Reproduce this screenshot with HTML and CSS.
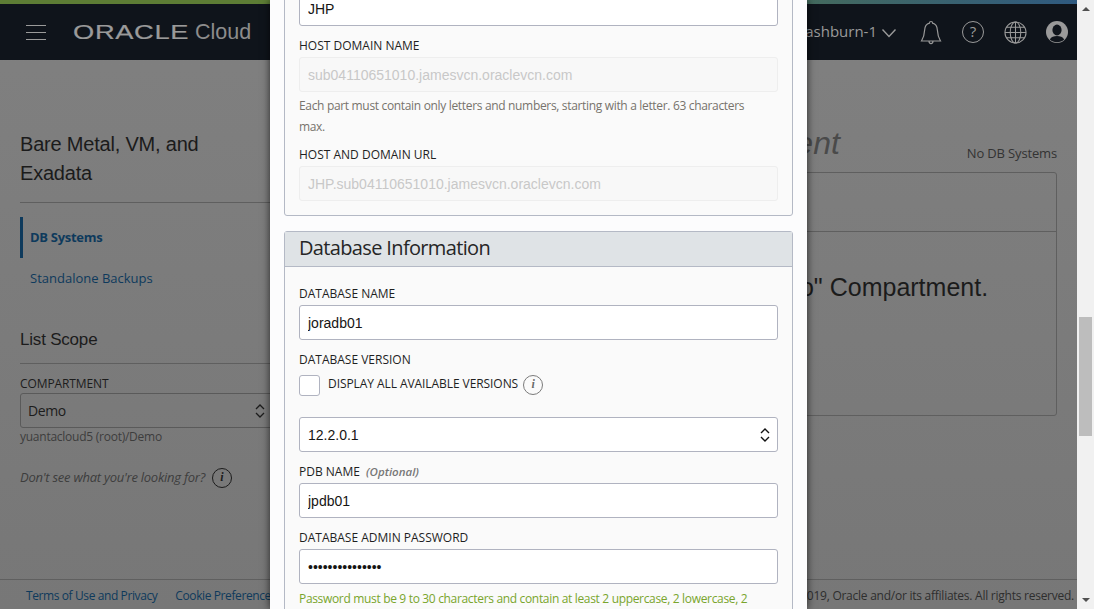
FILE: index.html
```html
<!DOCTYPE html>
<html lang="en">
<head>
    <meta charset="UTF-8">
    <title>Oracle Cloud</title>
    <link rel="stylesheet" href="styles.css">
</head>
<body>
<div class="viewport">
    <div class="strip"></div>
    <div class="topbar">
        <div class="burger"><span></span><span></span><span></span></div>
        <div class="logo"><span class="logo-word">ORACLE</span><span class="logo-cloud">Cloud</span></div>
        <div class="top-right">
            <span class="region">US East (Ashburn) us-ashburn-1</span>
            <svg class="chev" width="16" height="10" viewBox="0 0 16 10"><path d="M1.500 1.500 8 8.500l6.500-7" fill="none" stroke="#9a9a9a" stroke-width="1.400"/></svg>
            <svg class="top-icon bell" width="22" height="25" viewBox="0 0 22 25"><path d="M11 1.500c1 0 1.600.7 1.600 1.700 3.400.8 4.600 3.600 4.800 7 .2 4.800 1.300 7.800 3.100 10.800H1.500c1.800-3 2.900-6 3.100-10.800.2-3.400 1.400-6.200 4.800-7C9.400 2.200 10 1.500 11 1.500zM9 21c0 3.400 4 3.400 4 0" fill="none" stroke="#9a9a9a" stroke-width="1.200"/></svg>
            <span class="top-icon help-icon">?</span>
            <svg class="top-icon globe" width="23" height="23" viewBox="0 0 24 24"><g fill="none" stroke="#9a9a9a" stroke-width="1.100"><circle cx="12" cy="12" r="11"/><ellipse cx="12" cy="12" rx="5.500" ry="11"/><path d="M12 1v22M1 12h22M2.600 6.500h18.800M2.600 17.500h18.800"/></g></svg>
            <svg class="top-icon" width="22" height="22" viewBox="0 0 22 22"><circle cx="11" cy="11" r="11" fill="#9a9a9a"/><ellipse cx="11" cy="9" rx="4.600" ry="5.400" fill="#10151c"/><path d="M3.800 18.500c1.500-3 4-3.500 7.200-3.500s5.700.5 7.200 3.500c-2 1.900-4.500 2.700-7.200 2.700s-5.200-.8-7.200-2.700z" fill="#10151c"/></svg>
        </div>
    </div>

    <div class="main">
        <div class="side">
            <h2 class="side-title">Bare Metal, VM, and Exadata</h2>
            <ul class="side-nav">
                <li class="on">DB Systems</li>
                <li>Standalone Backups</li>
            </ul>
            <h3 class="scope-title">List Scope</h3>
            <div class="scope-label">COMPARTMENT</div>
            <div class="scope-select">
                <span>Demo</span>
                <svg width="10" height="16" viewBox="0 0 10 16"><path d="M1 6l4-4 4 4M1 10l4 4 4-4" fill="none" stroke="#1c1c1c" stroke-width="1.300"/></svg>
            </div>
            <div class="scope-path">yuantacloud5 (root)/Demo</div>
            <div class="scope-hint">Don't see what you're looking for? <span class="info dark">i</span></div>
        </div>
        <div class="content">
            <div class="content-head">
                <h1>DB Systems in Demo Compartment</h1>
                <span class="count">No DB Systems</span>
            </div>
            <div class="result-box">
                <div class="result-top"></div>
                <div class="result-msg">No DB Systems Found in the "Demo" Compartment.</div>
            </div>
        </div>
    </div>

    <div class="footer">
        <a>Terms of Use and Privacy</a>
        <a>Cookie Preferences</a>
        <span class="copy">Copyright © 2019, Oracle and/or its affiliates. All rights reserved.</span>
    </div>

    <!-- dialog on top of the dimmed page -->
    <div class="dialog">
        <div class="dialog-inner">
            <div class="card">
                <div class="card-body top">
                    <input class="text" type="text" value="JHP">
                    <label class="lbl">HOST DOMAIN NAME</label>
                    <input class="text" type="text" disabled value="sub04110651010.jamesvcn.oraclevcn.com">
                    <p class="help">Each part must contain only letters and numbers, starting with a letter. 63 characters max.</p>
                    <label class="lbl">HOST AND DOMAIN URL</label>
                    <input class="text" type="text" disabled value="JHP.sub04110651010.jamesvcn.oraclevcn.com">
                </div>
            </div>
            <div class="card">
                <div class="card-head">Database Information</div>
                <div class="card-body">
                    <label class="lbl">DATABASE NAME</label>
                    <input class="text" type="text" value="joradb01">
                    <label class="lbl">DATABASE VERSION</label>
                    <div class="check-row">
                        <span class="box"></span>
                        <span class="check-text">DISPLAY ALL AVAILABLE VERSIONS</span>
                        <span class="info">i</span>
                    </div>
                    <div class="fake-select">
                        <span>12.2.0.1</span>
                        <svg width="10" height="16" viewBox="0 0 10 16"><path d="M1 6l4-4 4 4M1 10l4 4 4-4" fill="none" stroke="#111" stroke-width="1.400"/></svg>
                    </div>
                    <label class="lbl">PDB NAME <em>(Optional)</em></label>
                    <input class="text" type="text" value="jpdb01">
                    <label class="lbl">DATABASE ADMIN PASSWORD</label>
                    <input class="text" type="password" value="aaaaaaaaaaaaaaa">
                    <p class="help ok">Password must be 9 to 30 characters and contain at least 2 uppercase, 2 lowercase, 2 special, and 2 numeric characters.</p>
                </div>
            </div>
        </div>
    </div>
</div>
<div class="scrollbar">
    <span class="arrow up"></span>
    <span class="thumb"></span>
    <span class="arrow down"></span>
</div>
</body>
</html>
```

FILE: styles.css
```css
* {
    margin: 0;
    padding: 0;
    box-sizing: border-box;
}

ul, li {
    list-style: none;
}

html, body {
    height: 100%;
    overflow: hidden;
}

body {
    display: flex;
    font-family: "Open Sans", "Noto Sans", sans-serif;
    font-size: 12px;
    color: #1c1c1c;
    background: #f1f1f1;
}

.viewport {
    width: 1077px;
    height: 609px;
    position: relative;
    overflow: hidden;
    display: flex;
    flex-direction: column;
    background: linear-gradient(#808080, #777);
}

.strip {
    height: 4px;
    background: linear-gradient(90deg, #5d7d35 0, #5d7d35 45%, #2f5a80 100%);
}

.topbar {
    height: 56px;
    background: #0f141b;
    display: flex;
    align-items: center;
    color: #9a9a9a;
}

.burger {
    width: 20px;
    margin-left: 26px;
    display: flex;
    flex-direction: column;
    gap: 6px;
}

.burger span {
    height: 1px;
    background: #9a9a9a;
}

.logo {
    margin-left: 27px;
    display: flex;
    align-items: center;
}

.logo-word {
    font-family: "Liberation Sans", sans-serif;
    font-size: 21px;
    width: 122px;
    letter-spacing: 0.5px;
    transform: scaleX(1.3);
    transform-origin: left center;
    -webkit-text-stroke: 0.2px #9a9a9a;
}

.logo-cloud {
    font-family: "Liberation Sans", sans-serif;
    font-size: 21.5px;
    color: #8c8c8c;
}

.top-right {
    margin-left: auto;
    display: flex;
    align-items: center;
    padding-right: 9px;
}

.region {
    font-size: 15px;
    margin-bottom: 3px;
}

.chev {
    margin: 2px 23px 0 4px;
}

.top-icon {
    flex: none;
}

.bell {
    margin-right: 20px;
}

.help-icon {
    width: 22px;
    height: 22px;
    border: 1px solid #9a9a9a;
    border-radius: 50%;
    margin-right: 20px;
    font-size: 15px;
    line-height: 19px;
    text-align: center;
}

.globe {
    margin-right: 19px;
}

.main {
    flex: 1;
    display: flex;
    min-height: 0;
}

.side {
    width: 270px;
    margin-left: 20px;
    padding-top: 70px;
    flex: none;
}

.side-title {
    font: normal 20px/29px "Liberation Sans", sans-serif;
    letter-spacing: -0.2px;
    padding-right: 70px;
    padding-bottom: 14px;
    border-bottom: 1px solid #5f5f5f;
    color: #1b1b1b;
}

.side-nav {
    margin-top: 14px;
    font-size: 13px;
    color: #0e3a5c;
}

.side-nav li {
    height: 41px;
    line-height: 41px;
    padding-left: 10px;
}

.side-nav .on {
    font-weight: 700;
    border-left: 3px solid #0e3a5c;
    padding-left: 7px;
    letter-spacing: -0.3px;
}

.scope-title {
    margin-top: 29px;
    font: normal 17px/24px "Liberation Sans", sans-serif;
    letter-spacing: -0.2px;
    padding-bottom: 11px;
    border-bottom: 1px solid #5f5f5f;
}

.scope-label {
    margin-top: 11px;
    line-height: 18px;
    letter-spacing: -0.1px;
}

.scope-select {
    height: 35px;
    border: 1px solid #5a5a5a;
    border-radius: 3px;
    display: flex;
    align-items: center;
    justify-content: space-between;
    padding: 0 24px 0 7px;
    font-size: 14px;
    letter-spacing: -0.4px;
}

.scope-path {
    line-height: 18px;
    color: #3d3d3d;
    letter-spacing: -0.25px;
}

.scope-hint {
    margin-top: 20px;
    font-size: 13px;
    font-style: italic;
    color: #3d3d3d;
    letter-spacing: -0.25px;
    display: flex;
    align-items: center;
    gap: 7px;
    line-height: 18px;
}

.info {
    width: 20px;
    height: 20px;
    border: 1.5px solid #7a7a7a;
    border-radius: 50%;
    color: #6a6a6a;
    font: italic 700 12px/17px "Liberation Serif", serif;
    letter-spacing: 0;
    text-align: center;
    flex: none;
}

.info.dark {
    margin-top: 2px;
    border-color: #1c1c1c;
    color: #1c1c1c;
}

.content {
    flex: 1;
    margin: 0 20px 0 40px;
    padding-top: 64px;
}

.content-head {
    height: 38px;
    display: flex;
    justify-content: space-between;
    align-items: flex-end;
}

.content-head h1 {
    padding-left: 3px;
    margin-bottom: -1px;
    font: italic 400 32px/40px "Liberation Sans", sans-serif;
    color: #4a4a4a;
    white-space: nowrap;
}

.count {
    font-size: 13px;
    line-height: 18px;
    letter-spacing: -0.15px;
    color: #333;
}

.result-box {
    margin-top: 10px;
    height: 244px;
    border: 1px solid #5f5f5f;
    border-radius: 3px;
}

.result-top {
    height: 59px;
    border-bottom: 1px solid #5f5f5f;
}

.result-msg {
    margin-top: 39px;
    padding-left: 78px;
    font: 25px/32px "Liberation Sans", sans-serif;
    color: #1b1b1b;
    white-space: nowrap;
}

.footer {
    height: 30px;
    border-top: 1px solid #5f5f5f;
    display: flex;
    align-items: center;
    padding: 1px 3px 0 26px;
    gap: 18px;
    color: #0e3a5c;
    letter-spacing: -0.4px;
}

.footer .copy {
    margin-left: auto;
    color: #2e2e2e;
    letter-spacing: -0.25px;
}

.dialog {
    position: absolute;
    left: 270px;
    top: 0;
    bottom: 0;
    width: 537px;
    background: #fcfcfd;
    box-shadow: 0 0 8px rgba(0, 0, 0, 0.7);
    overflow: hidden;
    padding: 0 14px;
}

.dialog-inner {
    margin-top: -10px;
}

.card {
    border: 1px solid #b4b9c5;
    border-radius: 3px;
    background: #fafafa;
    margin-bottom: 15px;
}

.card-head {
    height: 35px;
    line-height: 31px;
    background: #dfe3e6;
    border-bottom: 1px solid #b4b9c5;
    padding-left: 14px;
    font-size: 20px;
    letter-spacing: -0.65px;
    color: #262626;
}

.card-body {
    padding: 18px 14px 14px;
}

.card-body.top {
    padding-top: 0;
}

.lbl {
    display: block;
    margin: 11px 0 2px;
    line-height: 18px;
    color: #1f1f1f;
}

.card-body > .lbl:first-child {
    margin-top: 0;
}

.lbl em {
    margin-left: 3px;
    font-size: 11.5px;
    font-weight: 600;
    color: #777;
}

.text {
    display: block;
    width: 100%;
    height: 35px;
    border: 1px solid #b0b3c0;
    border-radius: 3px;
    background: #fff;
    padding: 0 8px;
    font: 14px "Liberation Sans", sans-serif;
    color: #161513;
    outline: none;
}

.text:disabled {
    background: #f8f8f8;
    border-color: #eee;
    color: #c8c8c8;
}

.help {
    margin: 3px 0 -2px;
    padding-right: 20px;
    line-height: 21px;
    color: #77736c;
    letter-spacing: -0.33px;
}

.help.ok {
    margin-top: 4px;
    color: #79a52c;
}

.check-row {
    margin-top: 6px;
    height: 42px;
    display: flex;
    align-items: flex-start;
}

.box {
    width: 21px;
    height: 21px;
    background: #fff;
    border: 1px solid #b0b3c0;
    border-radius: 3px;
}

.check-text {
    margin-left: 8px;
    line-height: 17px;
    letter-spacing: -0.07px;
    color: #1f1f1f;
}

.check-row .info {
    margin-left: 5px;
}

.fake-select {
    height: 35px;
    border: 1px solid #b0b3c0;
    border-radius: 3px;
    background: #fff;
    display: flex;
    align-items: center;
    justify-content: space-between;
    padding: 0 7px 0 8px;
    font: 14px "Liberation Sans", sans-serif;
    color: #161513;
}

.scrollbar {
    width: 17px;
    height: 609px;
    flex: none;
    display: flex;
    flex-direction: column;
    align-items: center;
    background: #f1f1f1;
}

.arrow {
    width: 0;
    height: 0;
    border-left: 4px solid transparent;
    border-right: 4px solid transparent;
}

.arrow.up {
    margin-top: 7px;
    border-bottom: 4px solid #505050;
}

.thumb {
    width: 13px;
    height: 119px;
    margin-top: 306px;
    background: #bdbdbd;
}

.arrow.down {
    margin-top: 162px;
    border-top: 4px solid #505050;
}
```
